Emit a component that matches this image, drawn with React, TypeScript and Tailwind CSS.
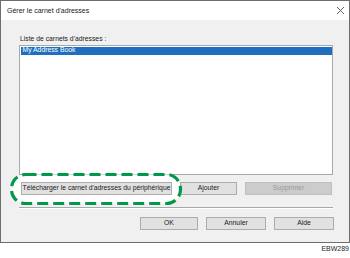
import React from "react";

const font = { fontFamily: '"Liberation Sans", Arial, sans-serif' };

function Btn({ children, w, disabled }: { children: React.ReactNode; w: string; disabled?: boolean }) {
  return (
    <div
      className={`${w} h-[13px] flex items-center justify-center border text-[6.8px] leading-none ${
        disabled ? "bg-[#cccccc] border-[#bfbfbf] text-[#9a9a9a]" : "bg-[#e1e1e1] border-[#adadad] text-[#1a1a1a]"
      }`}
    >
      {children}
    </div>
  );
}

export default function App() {
  return (
    <div className="relative w-[350px] h-[258px] bg-white overflow-hidden" style={font}>
      <div className="w-[350px] h-[243px] border border-[#6e6e6e] flex flex-col">
        <div className="h-[19px] bg-white flex items-center justify-between pl-[6px] pr-[4px] shrink-0">
          <span className="text-[7px] text-[#1a1a1a] leading-none">Gérer le carnet d'adresses</span>
          <svg width="9" height="9" viewBox="0 0 9 9">
            <path d="M1 1 L8 8 M8 1 L1 8" stroke="#555" strokeWidth="0.9" />
          </svg>
        </div>
        <div className="flex-1 bg-[#f0f0f0] pl-[18px] pr-[15px] pt-[16px] flex flex-col">
          <div className="text-[6.8px] leading-none text-[#1a1a1a] h-[9px] pl-[1px]">Liste de carnets d'adresses :</div>
          <div className="w-[314px] h-[130px] bg-white border border-[#a8a8a8] p-[0.5px]">
            <div className="h-[8px] bg-[#1e6fbe] text-white text-[6.8px] leading-none flex items-center pl-[2px]">
              My Address Book
            </div>
          </div>
          <div className="flex mt-[7px] pl-[2px]">
            <div className="relative z-10">
              <Btn w="w-[151px]">Télécharger le carnet d'adresses du périphérique</Btn>
            </div>
            <div className="ml-[8px]">
              <Btn w="w-[57px]">Ajouter</Btn>
            </div>
            <div className="ml-[8px]">
              <Btn w="w-[87px]" disabled>
                Supprimer
              </Btn>
            </div>
          </div>
          <div className="mt-[12px] h-[1px] w-[314px] bg-[#a8a8a8] border-b border-white box-content" />
          <div className="flex mt-[8px] pl-[121px]">
            <Btn w="w-[60px]">OK</Btn>
            <div className="ml-[8px]">
              <Btn w="w-[60px]">Annuler</Btn>
            </div>
            <div className="ml-[8px]">
              <Btn w="w-[60px]">Aide</Btn>
            </div>
          </div>
        </div>
      </div>
      <svg className="absolute left-0 top-0 pointer-events-none" width="350" height="258" style={{ zIndex: 5 }}>
        <rect x="11.5" y="174.5" width="169" height="29" rx="14" fill="white" stroke="#00994a" strokeWidth="3.2" strokeDasharray="11 5" />
      </svg>
      <div className="absolute right-[1px] top-[245px] text-[7px] leading-none text-[#222]">EBW289</div>
    </div>
  );
}
